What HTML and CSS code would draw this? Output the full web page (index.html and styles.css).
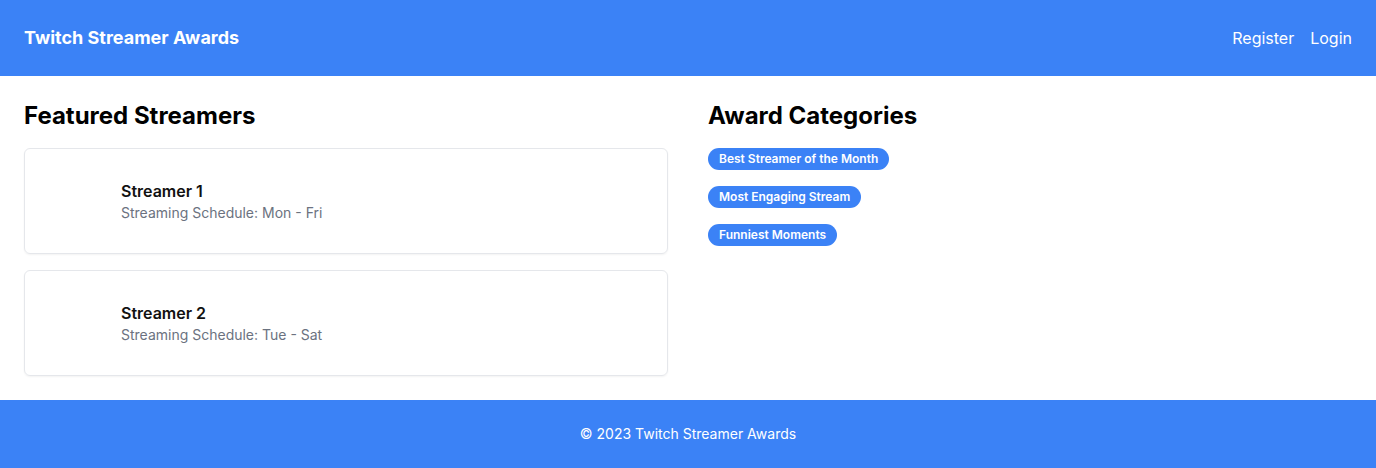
FILE: index.html
```html
<!DOCTYPE html>
<html lang="en">
<head>
<meta charset="utf-8">
<title>Twitch Streamer Awards</title>
<link rel="stylesheet" href="styles.css">
</head>
<body>
<header class="topbar">
  <div class="brand">Twitch Streamer Awards</div>
  <nav class="nav">
    <a href="#" class="nav-link">Register</a>
    <a href="#" class="nav-link">Login</a>
  </nav>
</header>
<main class="content">
  <section class="col">
    <h2 class="section-title">Featured Streamers</h2>
    <div class="cards">
      <div class="card">
        <div class="avatar"></div>
        <div class="card-text">
          <div class="name">Streamer 1</div>
          <div class="schedule">Streaming Schedule: Mon - Fri</div>
        </div>
      </div>
      <div class="card">
        <div class="avatar"></div>
        <div class="card-text">
          <div class="name">Streamer 2</div>
          <div class="schedule">Streaming Schedule: Tue - Sat</div>
        </div>
      </div>
    </div>
  </section>
  <section class="col">
    <h2 class="section-title">Award Categories</h2>
    <div class="badges">
      <span class="badge">Best Streamer of the Month</span>
      <span class="badge">Most Engaging Stream</span>
      <span class="badge">Funniest Moments</span>
    </div>
  </section>
</main>
<footer class="footer">© 2023 Twitch Streamer Awards</footer>
</body>
</html>
```
FILE: styles.css
```css
* { box-sizing: border-box; }
html, body { margin: 0; padding: 0; }
body {
  font-family: Inter, "Noto Sans", sans-serif;
  color: #000;
  background: #fff;
}
.topbar {
  background: #3b82f6;
  color: #fff;
  display: flex;
  justify-content: space-between;
  align-items: center;
  padding: 24px;
  height: 76px;
}
.brand {
  font-size: 18px;
  font-weight: 700;
  line-height: 28px;
}
.nav {
  display: flex;
  gap: 16px;
}
.nav-link {
  color: #fff;
  text-decoration: none;
  font-size: 16px;
  line-height: 24px;
}
.content {
  display: grid;
  grid-template-columns: 1fr 1fr;
  gap: 40px;
  padding: 24px;
}
.section-title {
  margin: 0 0 16px;
  font-size: 24px;
  line-height: 32px;
  font-weight: 700;
}
.cards {
  display: flex;
  flex-direction: column;
  gap: 16px;
}
.card {
  display: flex;
  align-items: center;
  border: 1px solid #e5e7eb;
  border-radius: 6px;
  box-shadow: 0 1px 2px rgba(0,0,0,0.05);
  padding: 20px 16px;
}
.avatar {
  width: 64px;
  height: 64px;
  margin-right: 16px;
  flex-shrink: 0;
}
.name {
  font-size: 16px;
  font-weight: 600;
  line-height: 24px;
  color: #111;
}
.schedule {
  font-size: 14px;
  line-height: 20px;
  color: #6b7280;
}
.badges {
  display: flex;
  flex-direction: column;
  align-items: flex-start;
  gap: 16px;
}
.badge {
  background: #3b82f6;
  color: #fff;
  font-size: 12px;
  font-weight: 600;
  line-height: 16px;
  padding: 3px 11px;
  border-radius: 999px;
}
.footer {
  background: #3b82f6;
  color: #fff;
  text-align: center;
  font-size: 14px;
  line-height: 24px;
  padding: 22px 24px;
}
```
